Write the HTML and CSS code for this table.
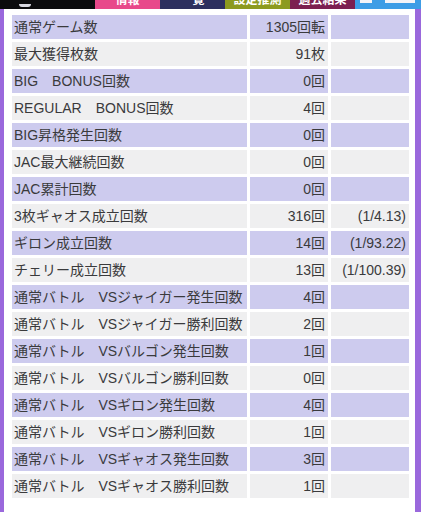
FILE: index.html
```html
<!DOCTYPE html>
<html lang="ja">
<head>
<meta charset="utf-8">
<link rel="stylesheet" href="styles.css">
</head>
<body>
<div class="tabs">
  <div class="tab tab-black"><span class="logo"></span></div>
  <div class="tab tab-pink"><span>情報</span></div>
  <div class="tab tab-navy"><span>一覧</span></div>
  <div class="tab tab-olive"><span>設定推測</span></div>
  <div class="tab tab-maroon"><span>過去結果</span></div>
  <div class="tab tab-blue"><i class="blk b1"></i><i class="blk b2"></i></div>
</div>
<div class="panel">
  <table class="stats">
    <colgroup><col class="c1"><col class="c2"><col class="c3"></colgroup>
    <tr class="lav"><td>通常ゲーム数</td><td class="num">1305回転</td><td class="num"></td></tr>
    <tr class="gry"><td>最大獲得枚数</td><td class="num">91枚</td><td class="num"></td></tr>
    <tr class="lav"><td>BIG　BONUS回数</td><td class="num">0回</td><td class="num"></td></tr>
    <tr class="gry"><td>REGULAR　BONUS回数</td><td class="num">4回</td><td class="num"></td></tr>
    <tr class="lav"><td>BIG昇格発生回数</td><td class="num">0回</td><td class="num"></td></tr>
    <tr class="gry"><td>JAC最大継続回数</td><td class="num">0回</td><td class="num"></td></tr>
    <tr class="lav"><td>JAC累計回数</td><td class="num">0回</td><td class="num"></td></tr>
    <tr class="gry"><td>3枚ギャオス成立回数</td><td class="num">316回</td><td class="num">(1/4.13)</td></tr>
    <tr class="lav"><td>ギロン成立回数</td><td class="num">14回</td><td class="num">(1/93.22)</td></tr>
    <tr class="gry"><td>チェリー成立回数</td><td class="num">13回</td><td class="num">(1/100.39)</td></tr>
    <tr class="lav"><td>通常バトル　VSジャイガー発生回数</td><td class="num">4回</td><td class="num"></td></tr>
    <tr class="gry"><td>通常バトル　VSジャイガー勝利回数</td><td class="num">2回</td><td class="num"></td></tr>
    <tr class="lav"><td>通常バトル　VSバルゴン発生回数</td><td class="num">1回</td><td class="num"></td></tr>
    <tr class="gry"><td>通常バトル　VSバルゴン勝利回数</td><td class="num">0回</td><td class="num"></td></tr>
    <tr class="lav"><td>通常バトル　VSギロン発生回数</td><td class="num">4回</td><td class="num"></td></tr>
    <tr class="gry"><td>通常バトル　VSギロン勝利回数</td><td class="num">1回</td><td class="num"></td></tr>
    <tr class="lav"><td>通常バトル　VSギャオス発生回数</td><td class="num">3回</td><td class="num"></td></tr>
    <tr class="gry"><td>通常バトル　VSギャオス勝利回数</td><td class="num">1回</td><td class="num"></td></tr>
  </table>
</div>
</body>
</html>
```

FILE: styles.css
```css
html, body {
  margin: 0;
  padding: 0;
  background: #ffffff;
}
body {
  width: 421px;
  height: 512px;
  overflow: hidden;
  font-family: "Liberation Sans", "Noto Sans CJK JP", sans-serif;
}
.tabs {
  display: flex;
  height: 9px;
  overflow: hidden;
}
.tab {
  display: flex;
  align-items: flex-end;
  justify-content: center;
  height: 9px;
  color: #ffffff;
  font-weight: bold;
  font-size: 12px;
  line-height: 14px;
}
.tab span {
  margin-bottom: 2px;
  white-space: nowrap;
}
.tab-black { width: 95px; background: #0b0b0d; justify-content: flex-start; }
.tab-pink { width: 65px; background: #e8488a; }
.tab-navy { width: 65px; background: #2c2f5e; }
.tab-olive { width: 65px; background: #8c9a1e; }
.tab-maroon { width: 65px; background: #7c1f50; }
.tab-blue { width: 66px; background: #3d9de6; align-items: flex-start; justify-content: flex-start; }
.logo {
  width: 12px;
  height: 3px;
  margin-left: 19px;
  margin-bottom: 1px;
  background: #d8d8e0;
  border-radius: 0 0 6px 6px;
}
.blk {
  display: block;
  height: 3px;
  background: #f4f4f8;
}
.b1 { width: 12px; margin-left: 5px; }
.b2 { width: 30px; margin-left: 13px; }
.panel {
  border-left: 4px solid #9a68dc;
  border-right: 6px solid #9a68dc;
  height: 503px;
  box-sizing: border-box;
  padding: 3px 0 0 5px;
}
.stats {
  border-collapse: separate;
  border-spacing: 3px;
  width: 403px;
  table-layout: fixed;
  font-size: 14px;
  color: #3a3a3c;
}
.c1 { width: 235px; }
.c2 { width: 78px; }
.c3 { width: 78px; }
.stats td {
  height: 24px;
  padding: 0 2px;
  white-space: nowrap;
  overflow: hidden;
  line-height: 24px;
}
.stats td.num {
  text-align: right;
  padding-right: 3px;
}
.lav td { background: #cdcbee; }
.gry td { background: #efeff0; }
```
